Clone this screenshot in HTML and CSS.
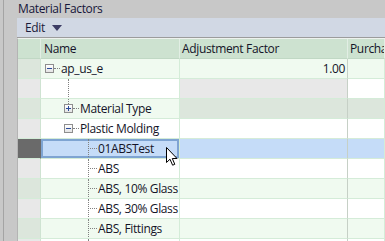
FILE: index.html
```html
<!DOCTYPE html>
<html lang="en">
<head>
    <meta charset="UTF-8">
    <title>Material Factors</title>
    <link rel="stylesheet" href="styles.css">
</head>
<body>
    <div class="window">
        <div class="pane">
            <div class="title">Material Factors</div>
            <div class="toolbar">
                <span class="menu">Edit</span>
                <span class="drop"></span>
            </div>
            <div class="grid">
                <div class="row head">
                    <div class="cell rh"></div>
                    <div class="cell name"><span class="label hd">Name</span></div>
                    <div class="cell adj"><span class="label">Adjustment Factor</span></div>
                    <div class="cell pur"><span class="label">Purchase</span></div>
                </div>

                <div class="row alt">
                    <div class="cell rh tint"></div>
                    <div class="cell name">
                        <span class="box minus lv0"></span><span class="hline short"></span><span class="label">ap_us_e</span>
                    </div>
                    <div class="cell adj num">1.00</div>
                    <div class="cell pur"></div>
                </div>

                <div class="row plain">
                    <div class="cell rh"></div>
                    <div class="cell name"><span class="vline full v1"></span></div>
                    <div class="cell adj grey"></div>
                    <div class="cell pur"></div>
                </div>

                <div class="row alt">
                    <div class="cell rh tint"></div>
                    <div class="cell name">
                        <span class="vline top v1"></span>
                        <span class="box plus lv1"></span><span class="hline short"></span><span class="label">Material Type</span>
                    </div>
                    <div class="cell adj tint"></div>
                    <div class="cell pur tint"></div>
                </div>

                <div class="row plain">
                    <div class="cell rh"></div>
                    <div class="cell name">
                        <span class="box minus lv1"></span><span class="hline short"></span><span class="label">Plastic Molding</span>
                    </div>
                    <div class="cell adj"></div>
                    <div class="cell pur"></div>
                </div>

                <div class="row selected">
                    <div class="cell rh"></div>
                    <div class="cell name">
                        <span class="vline full v2"></span>
                        <span class="leaf"></span><span class="label">01ABSTest</span>
                    </div>
                    <div class="cell adj"></div>
                    <div class="cell pur"></div>
                </div>

                <div class="row plain">
                    <div class="cell rh"></div>
                    <div class="cell name">
                        <span class="vline full v2"></span>
                        <span class="leaf"></span><span class="label">ABS</span>
                    </div>
                    <div class="cell adj"></div>
                    <div class="cell pur"></div>
                </div>

                <div class="row alt">
                    <div class="cell rh tint"></div>
                    <div class="cell name">
                        <span class="vline full v2"></span>
                        <span class="leaf"></span><span class="label">ABS, 10% Glass</span>
                    </div>
                    <div class="cell adj"></div>
                    <div class="cell pur"></div>
                </div>

                <div class="row plain">
                    <div class="cell rh"></div>
                    <div class="cell name">
                        <span class="vline full v2"></span>
                        <span class="leaf"></span><span class="label">ABS, 30% Glass</span>
                    </div>
                    <div class="cell adj"></div>
                    <div class="cell pur"></div>
                </div>

                <div class="row alt">
                    <div class="cell rh tint"></div>
                    <div class="cell name">
                        <span class="vline full v2"></span>
                        <span class="leaf"></span><span class="label">ABS, Fittings</span>
                    </div>
                    <div class="cell adj"></div>
                    <div class="cell pur"></div>
                </div>

                <div class="row plain">
                    <div class="cell rh"></div>
                    <div class="cell name"><span class="vline full v2"></span></div>
                    <div class="cell adj"></div>
                    <div class="cell pur"></div>
                </div>
            </div>
        </div>
    </div>

    <!-- mouse pointer over the selected row -->
    <svg class="pointer" width="13" height="20" viewBox="0 0 13 20">
        <path d="M0.5 0.5 L0.5 15.5 L4 12.2 L6.6 18.2 L8.8 17.3 L6.3 11.5 L11 11.5 Z" fill="#fff" stroke="#000" stroke-width="1" stroke-linejoin="miter"/>
    </svg>
</body>
</html>
```

FILE: styles.css
```css
body {
    margin: 0;
    background: #c8c8c8;
    font-family: 'Open Sans', 'Noto Sans', sans-serif;
    font-size: 12px;
    letter-spacing: -0.35px;
    color: #141428;
    height: 241px;
    overflow: hidden;
}

.window {
    padding-left: 3px;
    height: 100%;
}

.pane {
    border-left: 1px solid #a4a4a4;
    padding-left: 13px;
    height: 100%;
}

.title {
    height: 18px;
    line-height: 18px;
    padding-left: 1px;
    color: #16163a;
}

.toolbar {
    height: 19px;
    background: #d1d8e4;
    border-bottom: 1px solid #9c9c9c;
    display: flex;
    align-items: center;
    padding-left: 8px;
    gap: 7px;
}

.menu {
    color: #1a1a3a;
}

.drop {
    width: 0;
    height: 0;
    border-left: 5px solid transparent;
    border-right: 5px solid transparent;
    border-top: 6px solid #3c3c64;
    margin-top: 1px;
}

.grid {
    border-top: 1px solid #eef2ee;
    border-left: 1px solid #b4b4b4;
    background: #fff;
}

.row {
    display: grid;
    grid-template-columns: 23px 139px 168px 1fr;
    height: 20px;
}

.cell {
    border-right: 1px solid #d4ecd8;
    border-bottom: 1px solid #d4ecd8;
    display: flex;
    align-items: center;
    position: relative;
    white-space: nowrap;
    overflow: hidden;
}

.cell.adj {
    border-right-color: #c6d0c6;
}

.cell.rh {
    background: #e8e8e8;
    border-right-color: #cfe3d2;
}

.head .cell {
    background: #cde2d0;
    border-bottom-color: #c0d8c4;
    border-right-color: #e2eee4;
}

.head .cell .label {
    margin-left: 2px;
}

.head .cell .hd {
    margin-left: 3px;
}

.alt .cell {
    background: #f0faf0;
}

.alt .cell.rh,
.cell.tint,
.alt .cell.tint {
    background: #dce6dc;
}

.cell.grey {
    background: #e8e8e8;
}

.selected .cell {
    background: #c5dcf8;
}

.selected .cell.rh {
    background: #6a6a6a;
    border-right-color: #6a6a6a;
}

.selected .cell.name {
    box-shadow: inset 0 0 0 2px #7ea4d2;
}

.num {
    justify-content: flex-end;
    padding-right: 2px;
}

/* tree glyphs */
.box {
    width: 7px;
    height: 7px;
    border: 1px solid #8e8e8e;
    background: linear-gradient(#ffffff, #e4e4e4);
    position: relative;
    flex: none;
}

.box::before,
.box::after {
    content: "";
    position: absolute;
    background: #2a4c9a;
}

.box::before {
    left: 1px;
    top: 3px;
    width: 5px;
    height: 1px;
}

.plus::after {
    left: 3px;
    top: 1px;
    width: 1px;
    height: 5px;
}

.lv0 {
    margin-left: 4px;
}

.lv1 {
    margin-left: 23px;
}

.hline {
    border-top: 1px dotted #808080;
    flex: none;
}

.hline.short {
    width: 6px;
    margin-right: 1px;
}

.leaf {
    margin-left: 47px;
    width: 9px;
    border-top: 1px dotted #808080;
    flex: none;
    margin-right: 1px;
}

.vline {
    position: absolute;
    border-left: 1px dotted #808080;
}

.vline.full {
    top: 0;
    bottom: -1px;
}

.vline.top {
    top: 0;
    height: 5px;
}

.v1 {
    left: 27px;
}

.v2 {
    left: 47px;
}

.pointer {
    position: absolute;
    left: 166px;
    top: 147px;
}
```
